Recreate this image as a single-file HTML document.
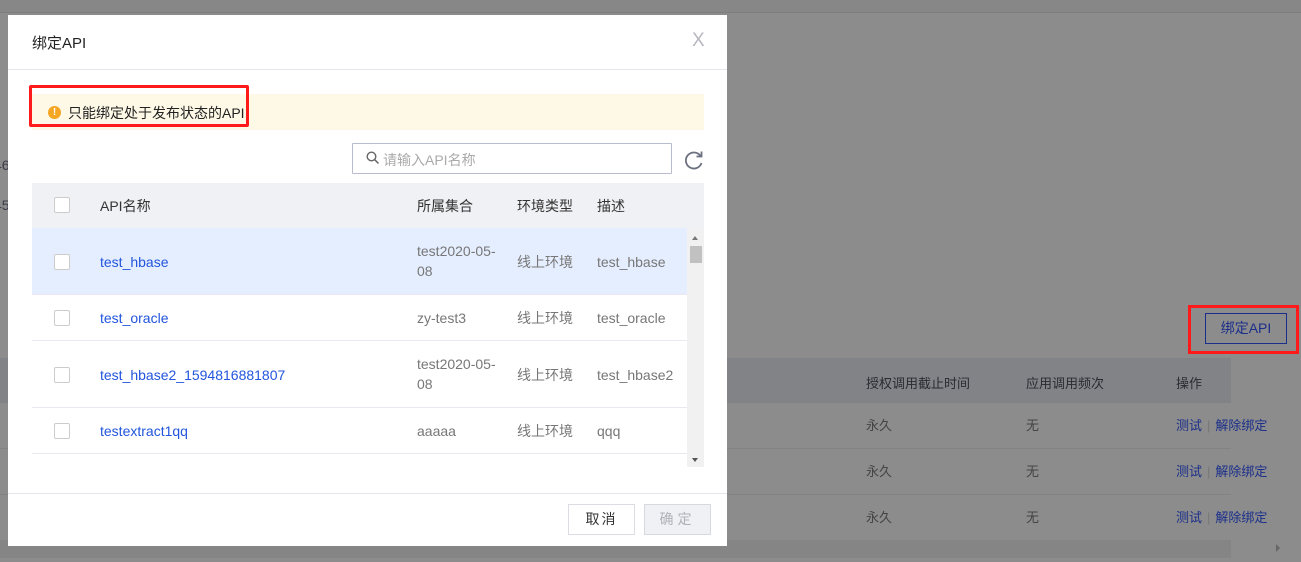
<!DOCTYPE html>
<html><head><meta charset="utf-8">
<style>
*{box-sizing:border-box;margin:0;padding:0}
body{width:1301px;height:562px;overflow:hidden;background:#8c8c8c;font-family:"Liberation Sans","Noto Sans CJK SC",sans-serif;font-size:13px;position:relative;color:#333}
.a{position:absolute}
.op{color:#1b2f8a;line-height:16px}
.op i{font-style:normal;color:#777;margin:0 5px}
</style></head><body>
<!-- background page -->
<div class="a" style="left:0;top:0;width:1301px;height:13px;background:#878787;border-bottom:1px solid #7e7e7e"></div>
<div class="a" style="left:-6px;top:157px;color:#3c3c4a;font-size:14px">46</div>
<div class="a" style="left:-6px;top:197px;color:#3c3c4a;font-size:14px">45</div>
<div class="a" style="left:1188px;top:305px;width:111px;height:49px;border:3px solid #ff1a1a"></div>
<div class="a" style="left:1205px;top:313px;width:82px;height:31px;border:1px solid #1b2f8a;color:#1b2f8a;font-size:14px;text-align:center;line-height:29px">绑定API</div>
<div class="a" style="left:0;top:358px;width:1231px;height:45px;background:#828386"></div>
<div class="a" style="left:866px;top:373px;color:#2a2a33;font-size:13px">授权调用截止时间</div>
<div class="a" style="left:1026px;top:373px;color:#2a2a33;font-size:13px">应用调用频次</div>
<div class="a" style="left:1176px;top:373px;color:#2a2a33;font-size:13px">操作</div>
<div class="a" style="left:0;top:448px;width:1231px;height:1px;background:#838383"></div>
<div class="a" style="left:0;top:494px;width:1231px;height:1px;background:#838383"></div>
<div class="a" style="left:0;top:540px;width:1231px;height:18px;background:#858585"></div>
<div class="a" style="left:1276px;top:544px;border-left:4px solid #666;border-top:4px solid transparent;border-bottom:4px solid transparent"></div>
<div class="a" style="left:866px;top:418px;color:#444;line-height:16px">永久</div>
<div class="a" style="left:1026px;top:418px;color:#444;line-height:16px">无</div>
<div class="a op" style="left:1176px;top:418px">测试<i>|</i>解除绑定</div>
<div class="a" style="left:866px;top:464px;color:#444;line-height:16px">永久</div>
<div class="a" style="left:1026px;top:464px;color:#444;line-height:16px">无</div>
<div class="a op" style="left:1176px;top:464px">测试<i>|</i>解除绑定</div>
<div class="a" style="left:866px;top:510px;color:#444;line-height:16px">永久</div>
<div class="a" style="left:1026px;top:510px;color:#444;line-height:16px">无</div>
<div class="a op" style="left:1176px;top:510px">测试<i>|</i>解除绑定</div>

<!-- modal -->
<div class="a" style="left:8px;top:15px;width:719px;height:531px;background:#fff">
  <div class="a" style="left:24px;top:17px;font-size:15px;color:#222">绑定API</div>
  <div class="a" style="left:684px;top:15px;font-size:19px;color:#b8b8c0;font-weight:300">X</div>
  <div class="a" style="left:0;top:54px;width:719px;height:1px;background:#e4e6ec"></div>
  <div class="a" style="left:24px;top:79px;width:672px;height:36px;background:#fef9e6"></div>
  <div class="a" style="left:21px;top:70px;width:220px;height:42px;border:3px solid #ff1a1a;border-radius:2px"></div>
  <div class="a" style="left:40px;top:91px;width:13px;height:13px;border-radius:50%;background:#f5a623;color:#fff;font-size:10px;font-weight:bold;text-align:center;line-height:13px">!</div>
  <div class="a" style="left:60px;top:88px;font-size:14px;color:#222">只能绑定处于发布状态的API</div>
  <div class="a" style="left:344px;top:128px;width:320px;height:31px;border:1px solid #b9bccc;border-radius:1px"></div>
  <svg class="a" style="left:358px;top:136px" width="14" height="14" viewBox="0 0 14 14"><circle cx="5.5" cy="5.5" r="4.3" fill="none" stroke="#666" stroke-width="1.4"/><path d="M8.7 8.7L12.5 12.5" stroke="#666" stroke-width="1.5"/></svg>
  <div class="a" style="left:375px;top:135px;font-size:14px;color:#aaa">请输入API名称</div>
  <svg class="a" style="left:675px;top:134px" width="22" height="22" viewBox="0 0 22 22"><path d="M17.5 7A8 8 0 1 0 18.5 14" fill="none" stroke="#6b7080" stroke-width="1.8"/><path d="M13.5 7.5L18.5 7.5L18.5 2.5" fill="none" stroke="#6b7080" stroke-width="1.8"/></svg>
  <div class="a" style="left:24px;top:168px;width:672px;height:45px;background:#f0f1f4"></div>
  <div class="a" style="left:46px;top:182px;width:16px;height:16px;border:1px solid #ccc;border-radius:2px;background:#fff"></div>
  <div class="a" style="left:92px;top:181px;font-size:14px;color:#333">API名称</div>
  <div class="a" style="left:409px;top:181px;font-size:14px;color:#333">所属集合</div>
  <div class="a" style="left:509px;top:181px;font-size:14px;color:#333">环境类型</div>
  <div class="a" style="left:589px;top:181px;font-size:14px;color:#333">描述</div>
  <!-- rows -->
  <div class="a" style="left:24px;top:213px;width:655px;height:67px;background:#e5eeff;border-bottom:1px solid #e8e8ee"></div>
  <div class="a" style="left:24px;top:280px;width:655px;height:46px;border-bottom:1px solid #e8e8ee"></div>
  <div class="a" style="left:24px;top:326px;width:655px;height:67px;border-bottom:1px solid #e8e8ee"></div>
  <div class="a" style="left:24px;top:393px;width:655px;height:46px;border-bottom:1px solid #e8e8ee"></div>
  <div class="a" style="left:46px;top:239px;width:16px;height:16px;border:1px solid #ccc;border-radius:2px;background:#fff"></div>
  <div class="a" style="left:46px;top:295px;width:16px;height:16px;border:1px solid #ccc;border-radius:2px;background:#fff"></div>
  <div class="a" style="left:46px;top:352px;width:16px;height:16px;border:1px solid #ccc;border-radius:2px;background:#fff"></div>
  <div class="a" style="left:46px;top:408px;width:16px;height:16px;border:1px solid #ccc;border-radius:2px;background:#fff"></div>
  <div class="a" style="left:92px;top:239px;font-size:14px;color:#2255dd">test_hbase</div>
  <div class="a" style="left:92px;top:295px;font-size:14px;color:#2255dd">test_oracle</div>
  <div class="a" style="left:92px;top:352px;font-size:14px;color:#2255dd">test_hbase2_1594816881807</div>
  <div class="a" style="left:92px;top:408px;font-size:14px;color:#2255dd">testextract1qq</div>
  <div class="a" style="left:409px;top:226px;font-size:14px;color:#777;line-height:20px">test2020-05-<br>08</div>
  <div class="a" style="left:409px;top:295px;font-size:14px;color:#777">zy-test3</div>
  <div class="a" style="left:409px;top:339px;font-size:14px;color:#777;line-height:20px">test2020-05-<br>08</div>
  <div class="a" style="left:409px;top:408px;font-size:14px;color:#777">aaaaa</div>
  <div class="a" style="left:509px;top:237px;font-size:14px;color:#777">线上环境</div>
  <div class="a" style="left:509px;top:293px;font-size:14px;color:#777">线上环境</div>
  <div class="a" style="left:509px;top:350px;font-size:14px;color:#777">线上环境</div>
  <div class="a" style="left:509px;top:406px;font-size:14px;color:#777">线上环境</div>
  <div class="a" style="left:589px;top:239px;font-size:14px;color:#777">test_hbase</div>
  <div class="a" style="left:589px;top:295px;font-size:14px;color:#777">test_oracle</div>
  <div class="a" style="left:589px;top:352px;font-size:14px;color:#777">test_hbase2</div>
  <div class="a" style="left:589px;top:408px;font-size:14px;color:#777">qqq</div>
  <!-- scrollbar -->
  <div class="a" style="left:679px;top:213px;width:17px;height:239px;background:#f1f1f1"></div>
  <div class="a" style="left:684px;top:221px;border-bottom:4px solid #777;border-left:3.5px solid transparent;border-right:3.5px solid transparent"></div>
  <div class="a" style="left:682px;top:231px;width:12px;height:17px;background:#c1c1c1"></div>
  <div class="a" style="left:684px;top:443px;border-top:4px solid #555;border-left:3.5px solid transparent;border-right:3.5px solid transparent"></div>
  <div class="a" style="left:0;top:478px;width:719px;height:1px;background:#e4e6ec"></div>
  <div class="a" style="left:560px;top:489px;width:67px;height:31px;border:1px solid #dcdde3;font-size:14px;text-align:center;line-height:29px;color:#333;letter-spacing:2px">取消</div>
  <div class="a" style="left:636px;top:489px;width:67px;height:31px;border:1px solid #d8d9de;background:#f0f1f4;font-size:14px;text-align:center;line-height:29px;color:#b0b0b8;letter-spacing:4px">确定</div>
</div>
</body></html>
